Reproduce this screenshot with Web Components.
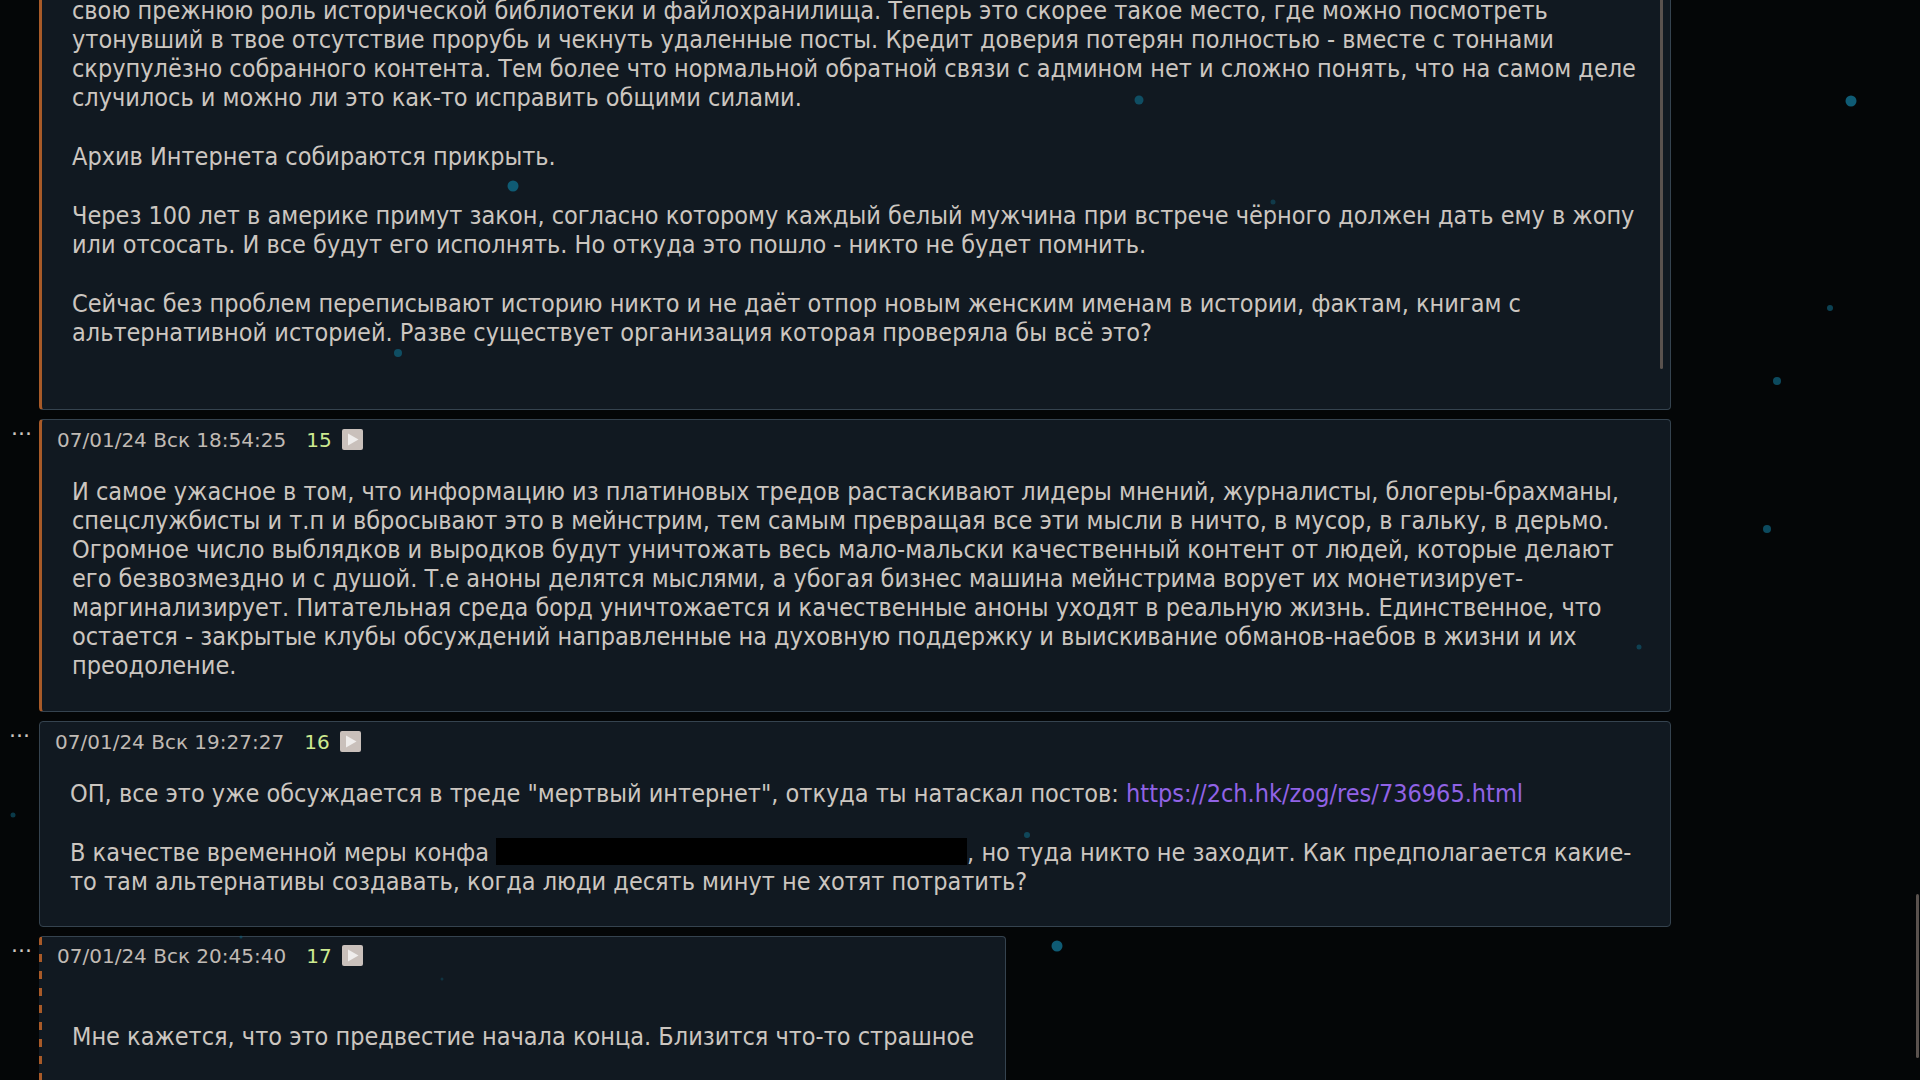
<!DOCTYPE html>
<html lang="ru">
<head>
<meta charset="utf-8">
<title>Тред</title>
<style>
html, body { height: 100%; }
body { margin: 0; overflow: hidden; background: #040607; color: #ccc6c0; font: 25px/29px "DejaVu Sans Condensed", "DejaVu Sans", sans-serif; }
p { margin: 0 0 30px; }
p:last-child { margin-bottom: 0; }
a { color: #9163e6; text-decoration: none; }
</style>
</head>
<body>
<board-thread>
  <board-post kind="clipped">
    <p>свою прежнюю роль исторической библиотеки и файлохранилища. Теперь это скорее такое место, где можно посмотреть<br>утонувший в твое отсутствие прорубь и чекнуть удаленные посты. Кредит доверия потерян полностью - вместе с тоннами<br>скрупулёзно собранного контента. Тем более что нормальной обратной связи с админом нет и сложно понять, что на самом деле<br>случилось и можно ли это как-то исправить общими силами.</p>
    <p>Архив Интернета собираются прикрыть.</p>
    <p>Через 100 лет в америке примут закон, согласно которому каждый белый мужчина при встрече чёрного должен дать ему в жопу<br>или отсосать. И все будут его исполнять. Но откуда это пошло - никто не будет помнить.</p>
    <p>Сейчас без проблем переписывают историю никто и не даёт отпор новым женским именам в истории, фактам, книгам с<br>альтернативной историей. Разве существует организация которая проверяла бы всё это?</p>
  </board-post>
  <board-post kind="marked" date="07/01/24 Вск 18:54:25" num="15">
    <p>И самое ужасное в том, что информацию из платиновых тредов растаскивают лидеры мнений, журналисты, блогеры-брахманы,<br>спецслужбисты и т.п и вбросывают это в мейнстрим, тем самым превращая все эти мысли в ничто, в мусор, в гальку, в дерьмо.<br>Огромное число выблядков и выродков будут уничтожать весь мало-мальски качественный контент от людей, которые делают<br>его безвозмездно и с душой. Т.е аноны делятся мыслями, а убогая бизнес машина мейнстрима ворует их монетизирует-<br>маргинализирует. Питательная среда борд уничтожается и качественные аноны уходят в реальную жизнь. Единственное, что<br>остается - закрытые клубы обсуждений направленные на духовную поддержку и выискивание обманов-наебов в жизни и их<br>преодоление.</p>
  </board-post>
  <board-post kind="plain" date="07/01/24 Вск 19:27:27" num="16">
    <p>ОП, все это уже обсуждается в треде "мертвый интернет", откуда ты натаскал постов: <a href="https://2ch.hk/zog/res/736965.html">https://2ch.hk/zog/res/736965.html</a></p>
    <p>В качестве временной меры конфа <redacted-text></redacted-text>, но туда никто не заходит. Как предполагается какие-<br>то там альтернативы создавать, когда люди десять минут не хотят потратить?</p>
  </board-post>
  <board-post kind="dashed" date="07/01/24 Вск 20:45:40" num="17">
    <p>Мне кажется, что это предвестие начала конца. Близится что-то страшное</p>
  </board-post>
</board-thread>
<drifting-dots></drifting-dots>
<page-scroll></page-scroll>
<script>
class BoardThread extends HTMLElement {
  constructor() {
    super();
    this.attachShadow({ mode: "open" }).innerHTML = `
      <style>
        :host { display: block; }
        main { display: flex; flex-direction: column; gap: 9px; }
      </style>
      <main><slot></slot></main>`;
  }
}

class BoardPost extends HTMLElement {
  connectedCallback() {
    if (this.shadowRoot) return;
    const clipped = this.getAttribute("kind") === "clipped";
    const num = this.getAttribute("num");
    this.attachShadow({ mode: "open" }).innerHTML = `
      <style>
        :host { display: flex; align-items: flex-start; --edge: 3px solid #a85a28; }
        :host([kind="plain"]) { --edge: 1px solid #35434f; }
        :host([kind="dashed"]) { --edge: 3px solid transparent; }
        :host([kind="clipped"]) { margin-top: -40px; }
        .side { box-sizing: border-box; flex: none; width: 39px; padding-right: 7px; display: flex; justify-content: flex-end; }
        :host([kind="plain"]) .side { padding-right: 9px; }
        button { margin: 0; padding: 0; border: 0; background: none; color: inherit; cursor: pointer; }
        .menu { height: 29px; margin-top: -6px; font: 22px/29px "DejaVu Sans", sans-serif; }
        article { box-sizing: border-box; max-width: 85vw; padding: 9px 0 31px; background: #111921;
          border: 1px solid #35434f; border-left: var(--edge); border-radius: 4px; }
        :host(:not([kind="dashed"])) article { width: 85vw; }
        :host([kind="plain"]) article { padding-bottom: 30px; }
        :host([kind="dashed"]) article { padding-top: 8px;
          background: repeating-linear-gradient(#a85a28 0 8px, #111921 8px 17px) 0 1px / 3px 100% repeat-y border-box, #111921; }
        header { display: flex; align-items: flex-start; height: 21px; padding-left: 15px;
          font: 20px/23px "DejaVu Sans", sans-serif; color: #c0bab4; }
        .num { margin-left: 20px; color: #cdea90; }
        .play { width: 21px; height: 21px; margin-left: 10px; display: flex; }
        svg { display: block; }
        .text { padding: 27px 31px 0 30px; white-space: nowrap; }
        :host([kind="dashed"]) .text { padding-top: 56px; padding-bottom: 29px; }
        :host([kind="clipped"]) article { padding: 0 7px 40px 0; }
        .scroller { display: flex; }
        .scroller .text { flex: 1; padding: 35px 0 22px 30px; }
        .bar { width: 3px; border-radius: 2px; background: #5a524e; }
      </style>
      <div class="side">${clipped ? "" : `<button class="menu" aria-haspopup="menu">...</button>`}</div>
      <article>
        ${clipped ? "" : `<header><time>${this.getAttribute("date")}</time><span class="num">${num}</span>
          <button class="play" aria-label="play"><svg width="21" height="21" viewBox="0 0 21 21"><rect width="21" height="21" rx="2" fill="#c9c0bb"/><path d="M6 4.5 16.5 10.5 6 16.5z" fill="#efedec"/></svg></button></header>`}
        <div class="${clipped ? "scroller" : ""}"><div class="text"><slot></slot></div>${clipped ? `<div class="bar"></div>` : ""}</div>
      </article>`;
  }
}

class RedactedText extends HTMLElement {
  constructor() {
    super();
    this.attachShadow({ mode: "open" }).innerHTML = `
      <style>:host { display: inline-block; width: 471px; height: 27px; vertical-align: top; background: #000; }</style>`;
  }
}

class DriftingDots extends HTMLElement {
  constructor() {
    super();
    const dots = [
      [1139, 100, 4.5, 0.8], [513, 186, 5.5, 1], [398, 353, 4, 0.8], [1273, 202, 2.5, 0.5],
      [1851, 101, 5.5, 1], [1830, 308, 3, 0.7], [1777, 381, 4, 0.8], [1767, 529, 4, 0.8],
      [1639, 647, 2.5, 0.6], [13, 815, 2.5, 0.6], [1027, 835, 3, 0.7], [1057, 946, 5.5, 1],
      [241, 937, 1.5, 0.6], [442, 979, 1.5, 0.4]
    ];
    this.attachShadow({ mode: "open" }).innerHTML = `
      <style>
        :host { position: fixed; inset: 0; pointer-events: none; }
        svg { display: block; width: 100%; height: 100%; }
      </style>
      <svg aria-hidden="true">${dots.map(([x, y, r, o]) =>
        `<circle cx="${x}" cy="${y}" r="${r}" fill="#0f5b74" opacity="${o}"/>`).join("")}</svg>`;
  }
}

class PageScroll extends HTMLElement {
  constructor() {
    super();
    this.attachShadow({ mode: "open" }).innerHTML = `
      <style>
        :host { position: fixed; top: 0; right: 1px; bottom: 22px; width: 3px; display: flex; flex-direction: column; justify-content: flex-end; }
        div { height: 164px; border-radius: 2px; background: #5a524e; }
      </style>
      <div></div>`;
  }
}

customElements.define("board-thread", BoardThread);
customElements.define("board-post", BoardPost);
customElements.define("redacted-text", RedactedText);
customElements.define("drifting-dots", DriftingDots);
customElements.define("page-scroll", PageScroll);
</script>
</body>
</html>
